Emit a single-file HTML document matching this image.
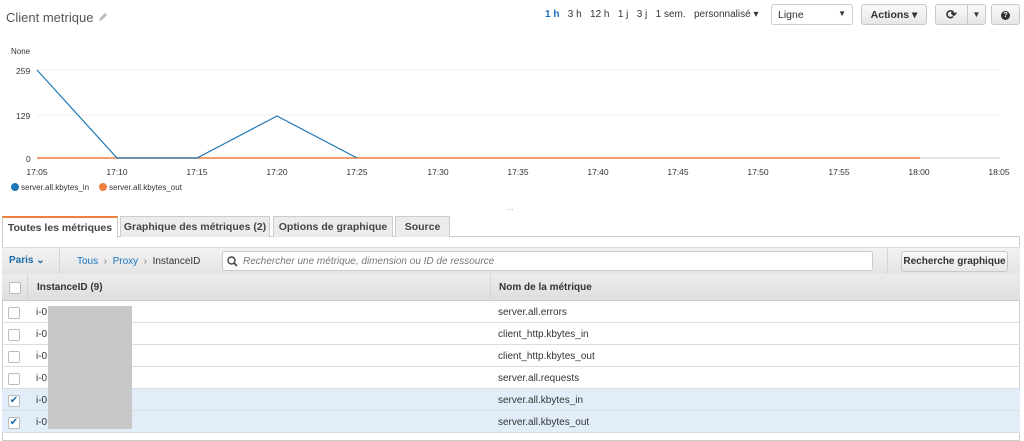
<!DOCTYPE html>
<html><head><meta charset="utf-8"><style>
body{margin:0;width:1024px;height:441px;overflow:hidden;background:#fff;font-family:"Liberation Sans",sans-serif;font-size:10px;color:#333;position:relative}
.a{position:absolute}
.btn{position:absolute;border:1px solid #c9c9c9;border-radius:3px;background:linear-gradient(#fafafa,#e6e6e6);font-weight:bold;font-size:10.5px;color:#333;box-sizing:border-box;text-align:center;line-height:20px}
.tab{position:absolute;top:216px;height:21px;border:1px solid #ccc;border-bottom:none;background:#ececec;font-weight:bold;font-size:10.5px;text-align:center;line-height:21px;box-sizing:border-box;color:#444}
.row{position:absolute;left:2px;width:1018px;height:22px;border-bottom:1px solid #ddd;box-sizing:border-box;font-size:10px}
.row span{position:absolute;top:0;line-height:23px}
.cb{position:absolute;left:6px;top:6px;width:10px;height:10px;border:1px solid #bbb;border-radius:2px;background:#fff}
</style></head><body>
<div class="a" style="left:6px;top:10px;font-size:13px;color:#555">Client metrique</div>
<svg class="a" style="left:98px;top:12px" width="10" height="10"><path d="M1 9 L2 6 L7 1 L9 3 L4 8 Z" fill="#bbb"/></svg>
<div class="a" style="left:545px;top:9px;font-size:10px"><b style="color:#1a73c0">1 h</b>&nbsp;&nbsp;&nbsp;3 h&nbsp;&nbsp;&nbsp;12 h&nbsp;&nbsp;&nbsp;1 j&nbsp;&nbsp;&nbsp;3 j&nbsp;&nbsp;&nbsp;1 sem.&nbsp;&nbsp;&nbsp;personnalisé ▾</div>
<div class="a" style="left:771px;top:4px;width:82px;height:21px;border:1px solid #ccc;border-radius:3px;box-sizing:border-box;font-size:10.5px;padding:4px 6px;background:#fff">Ligne<span style="float:right;font-size:8px">▼</span></div>
<div class="btn" style="left:861px;top:4px;width:66px;height:21px">Actions ▾</div>
<div class="btn" style="left:935px;top:4px;width:33px;height:21px;border-radius:3px 0 0 3px;font-size:13px">⟳</div>
<div class="btn" style="left:967px;top:4px;width:19px;height:21px;border-radius:0 3px 3px 0;font-size:8px">▼</div>
<div class="btn" style="left:991px;top:4px;width:29px;height:21px"><span style="display:inline-block;width:9px;height:9px;border-radius:50%;background:#333;color:#fff;font-size:7px;line-height:9px;vertical-align:middle">?</span></div>
<div class="a" style="left:11px;top:47px;font-size:8px">None</div>
<div class="a" style="left:16px;top:66px;font-size:8.5px">259</div>
<div class="a" style="left:16px;top:111px;font-size:8.5px">129</div>
<div class="a" style="left:26px;top:154px;font-size:8.5px">0</div>
<svg class="a" style="left:0;top:0" width="1024" height="200">
<line x1="37" y1="70" x2="1000" y2="70" stroke="#eee"/>
<line x1="37" y1="115" x2="1000" y2="115" stroke="#eee"/>
<line x1="37" y1="158" x2="1000" y2="158" stroke="#ccc"/>
<line x1="37" y1="158" x2="920" y2="158" stroke="#f07f40" stroke-width="1.5"/>
<polyline points="37,70 117,158 197,158 277,116 357,158" fill="none" stroke="#1f77b4" stroke-width="1.2"/>
<g font-size="8.5" fill="#333" font-family="Liberation Sans" text-anchor="middle">
<text x="37" y="175">17:05</text><text x="117" y="175">17:10</text><text x="197" y="175">17:15</text><text x="277" y="175">17:20</text><text x="357" y="175">17:25</text><text x="438" y="175">17:30</text><text x="518" y="175">17:35</text><text x="598" y="175">17:40</text><text x="678" y="175">17:45</text><text x="758" y="175">17:50</text><text x="839" y="175">17:55</text><text x="919" y="175">18:00</text><text x="999" y="175">18:05</text>
</g>
<circle cx="15" cy="187" r="4" fill="#1f77b4"/><text x="21" y="190" font-size="8" font-family="Liberation Sans" fill="#333">server.all.kbytes_in</text>
<circle cx="103" cy="187" r="4" fill="#f07f40"/><text x="109" y="190" font-size="8" font-family="Liberation Sans" fill="#333">server.all.kbytes_out</text>
</svg>
<div class="a" style="left:507px;top:203px;font-size:8px;color:#999">...</div>
<div class="a" style="left:2px;top:236px;width:1018px;height:205px;border:1px solid #ccc;box-sizing:border-box"></div>
<div class="tab" style="left:2px;width:116px;background:#fff;border-top:2px solid #f07f40;height:22px">Toutes les métriques</div>
<div class="tab" style="left:120px;width:150px">Graphique des métriques (2)</div>
<div class="tab" style="left:273px;width:120px">Options de graphique</div>
<div class="tab" style="left:395px;width:55px">Source</div>
<div class="a" style="left:2px;top:247px;width:1018px;height:27px;background:linear-gradient(#f2f2f2,#e4e4e4);border-top:1px solid #ddd;box-sizing:border-box"></div>
<div class="a" style="left:9px;top:255px;font-size:10px;font-weight:bold;color:#1a6aa8">Paris ⌄</div>
<div class="a" style="left:59px;top:248px;width:1px;height:26px;background:#d4d4d4"></div>
<div class="a" style="left:77px;top:256px;font-size:10px;color:#1a73c0">Tous <span style="color:#777">&nbsp;›&nbsp;</span> Proxy <span style="color:#777">&nbsp;›&nbsp;</span> <span style="color:#333">InstanceID</span></div>
<div class="a" style="left:222px;top:251px;width:651px;height:20px;background:#fff;border:1px solid #ccc;border-radius:3px;box-sizing:border-box;font-size:10px;font-style:italic;color:#777;padding:4px 0 0 20px">Rechercher une métrique, dimension ou ID de ressource</div>
<svg class="a" style="left:227px;top:256px" width="11" height="11"><circle cx="4.5" cy="4.5" r="3.5" stroke="#444" stroke-width="1.4" fill="none"/><line x1="7" y1="7" x2="10" y2="10" stroke="#444" stroke-width="1.6"/></svg>
<div class="a" style="left:887px;top:248px;width:1px;height:26px;background:#d4d4d4"></div>
<div class="btn" style="left:901px;top:251px;width:107px;height:21px;font-size:10px">Recherche graphique</div>
<div class="a" style="left:2px;top:274px;width:1018px;height:27px;background:linear-gradient(#ececec,#dedede);border-bottom:1px solid #ccc;box-sizing:border-box;font-weight:bold;font-size:10px;line-height:27px">
<div class="cb" style="top:8px;left:7px"></div>
<div class="a" style="left:25px;top:0;width:1px;height:27px;background:#d4d4d4"></div>
<span class="a" style="left:35px;top:0">InstanceID (9)</span>
<div class="a" style="left:488px;top:0;width:1px;height:27px;background:#d4d4d4"></div>
<span class="a" style="left:497px;top:0">Nom de la métrique</span></div>
<div class="row" style="top:301px"><div class="cb"></div><span style="left:34px">i-0</span><span style="left:496px">server.all.errors</span></div>
<div class="row" style="top:323px"><div class="cb"></div><span style="left:34px">i-0</span><span style="left:496px">client_http.kbytes_in</span></div>
<div class="row" style="top:345px"><div class="cb"></div><span style="left:34px">i-0</span><span style="left:496px">client_http.kbytes_out</span></div>
<div class="row" style="top:367px"><div class="cb"></div><span style="left:34px">i-0</span><span style="left:496px">server.all.requests</span></div>
<div class="row" style="top:389px;background:#e1eef9"><div class="cb" style="color:#1a6aa8;font-size:10px;line-height:10px;text-align:center">✔</div><span style="left:34px">i-0</span><span style="left:496px">server.all.kbytes_in</span></div>
<div class="row" style="top:411px;background:#e1eef9"><div class="cb" style="color:#1a6aa8;font-size:10px;line-height:10px;text-align:center">✔</div><span style="left:34px">i-0</span><span style="left:496px">server.all.kbytes_out</span></div>
<div class="a" style="left:48px;top:306px;width:84px;height:123px;background:#c8c8c8"></div>
</body></html>
